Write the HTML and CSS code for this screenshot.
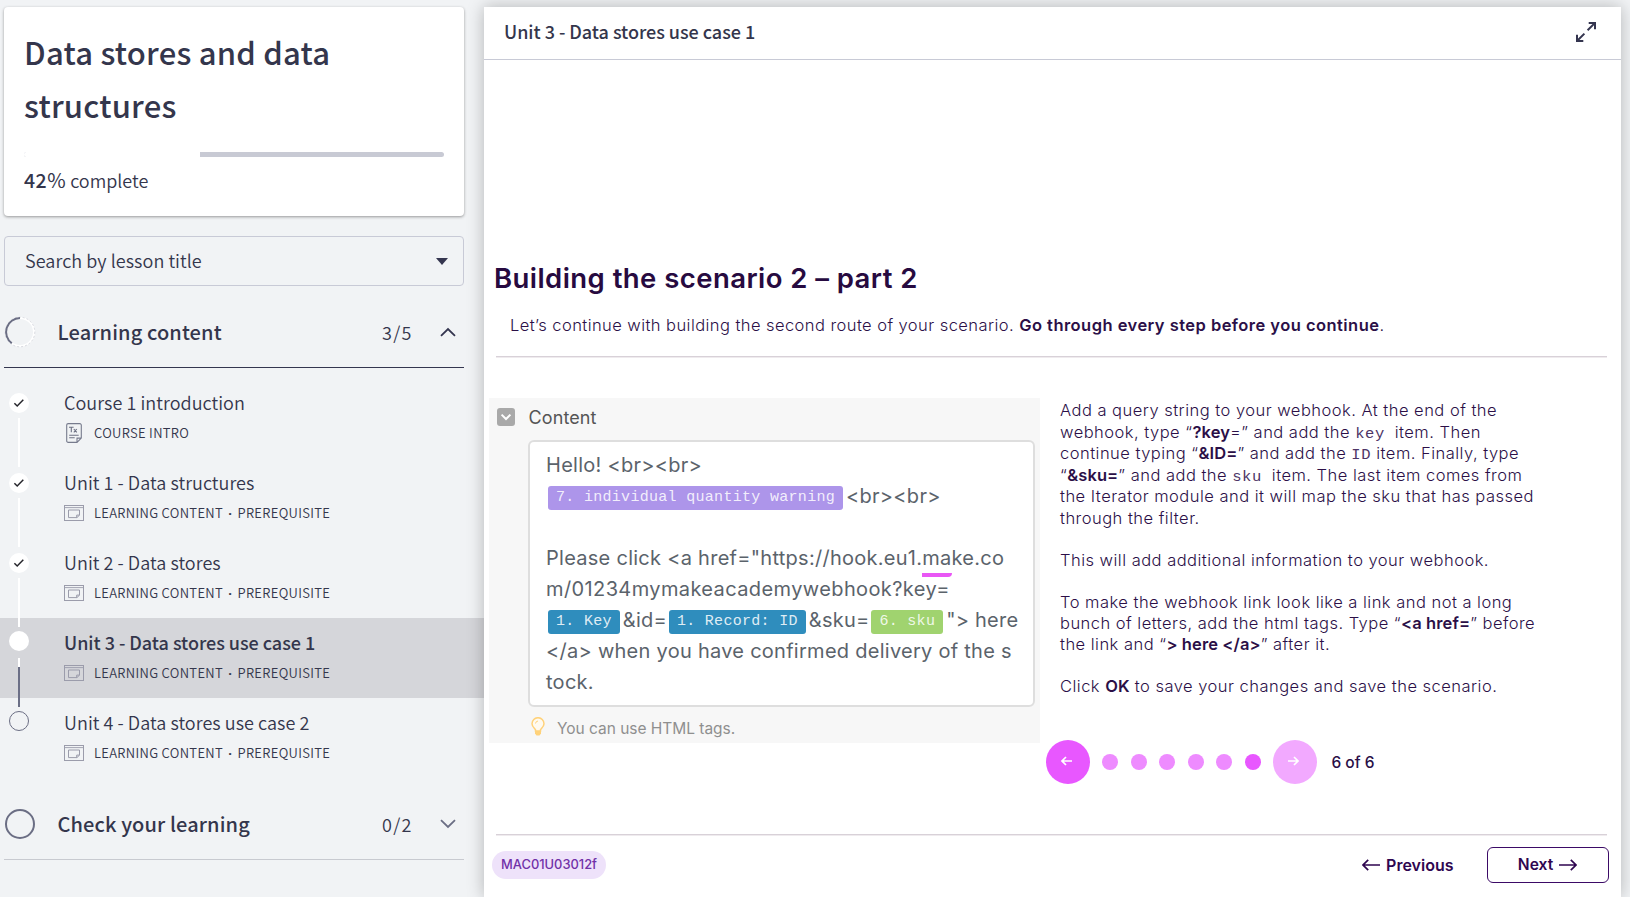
FILE: index.html
```html
<!DOCTYPE html>
<html lang="en">
<head>
<meta charset="utf-8">
<title>Data stores and data structures</title>
<link rel="stylesheet" href="styles.css">
</head>
<body>
<svg class="defs" width="0" height="0" aria-hidden="true">
  <symbol id="check" viewBox="0 0 20 20"><circle cx="10" cy="10" r="10" fill="#fff"/><path d="M5.4 10.3 8.2 13 14.3 6.8" fill="none" stroke="#26262c" stroke-width="1.5"/></symbol>
  <symbol id="lesson" viewBox="0 0 20 16"><g fill="none" stroke="#9b9cab" stroke-width="1"><rect x=".5" y=".5" width="19" height="15"/><path d="M.5 2.6h19" stroke-width=".9"/><path d="M4.5 5h11v5.2l-2.600 2.400H4.500Z"/><path d="M12.700 12.600v-2.500h2.800"/></g></symbol>
  <symbol id="arrow-right" viewBox="0 0 18 12"><path d="M0 6h17M11.800.8 17 6l-5.200 5.200" fill="none" stroke="currentColor" stroke-width="1.700"/></symbol>
  <symbol id="arrow-left" viewBox="0 0 18 12"><path d="M18 6H1M6.200.8 1 6l5.200 5.200" fill="none" stroke="currentColor" stroke-width="1.700"/></symbol>
</svg>
<div class="app">
  <aside class="sidebar">
    <section class="course-card">
      <h1 class="course-title">Data stores and data structures</h1>
      <div class="progress"><div class="progress-done" style="width:42%"></div></div>
      <p class="progress-label"><b>42</b><span class="unit">%</span> complete</p>
    </section>
    <div class="search"><span>Search by lesson title</span><svg width="12" height="7" viewBox="0 0 12 7"><path d="M0 0h12L6 7Z" fill="#34354f"/></svg></div>

    <header class="section-head open">
      <svg class="ring" width="32" height="32" viewBox="0 0 32 32"><circle cx="16" cy="16" r="14" fill="none" stroke="#fff" stroke-width="2"/><circle cx="16" cy="16" r="14.800" fill="none" stroke="#c9cad2" stroke-width=".7" stroke-dasharray="2 2"/><path d="M16 2A14 14 0 0 0 7.800 27.300" fill="none" stroke="#6b6e84" stroke-width="2"/></svg>
      <h2>Learning content</h2><span class="count">3/5</span>
      <svg width="16" height="10" viewBox="0 0 16 10"><path d="M1 8.800 8 2l7 6.800" fill="none" stroke="#34354f" stroke-width="1.800"/></svg>
    </header>
    <ul class="lessons">
      <li class="lesson">
        <div class="rail"><svg width="20" height="20"><use href="#check"/></svg><i class="link"></i></div>
        <div class="info"><p class="name">Course 1 introduction</p>
        <p class="meta"><svg class="doc" width="16" height="20" viewBox="0 0 16 20"><path d="M2.200.6h11.600a1.500 1.500 0 0 1 1.500 1.500v13l-4.300 4.300H2.200A1.500 1.500 0 0 1 .7 17.900V2.100A1.500 1.500 0 0 1 2.200.6ZM11 19.200v-4.100h4.200" fill="none" stroke="#777b8d" stroke-width="1.100"/><path d="M3 4.300h4.600M5.300 4.300v5M7.800 6l3 3.400M10.800 6l-3 3.400M3.200 12.300h9.500M3.200 14.800h5.500" fill="none" stroke="#6d7183" stroke-width="1.100"/></svg><span>COURSE INTRO</span></p></div>
      </li>
      <li class="lesson">
        <div class="rail"><svg width="20" height="20"><use href="#check"/></svg><i class="link"></i></div>
        <div class="info"><p class="name">Unit 1 - Data structures</p>
        <p class="meta"><svg width="20" height="16"><use href="#lesson"/></svg><span>LEARNING CONTENT <i class="sep">·</i> PREREQUISITE</span></p></div>
      </li>
      <li class="lesson">
        <div class="rail"><svg width="20" height="20"><use href="#check"/></svg><i class="link"></i></div>
        <div class="info"><p class="name">Unit 2 - Data stores</p>
        <p class="meta"><svg width="20" height="16"><use href="#lesson"/></svg><span>LEARNING CONTENT <i class="sep">·</i> PREREQUISITE</span></p></div>
      </li>
      <li class="lesson current">
        <div class="rail"><i class="dot"></i><i class="link half"></i></div>
        <div class="info"><p class="name">Unit 3 - Data stores use case 1</p>
        <p class="meta"><svg width="20" height="16"><use href="#lesson"/></svg><span>LEARNING CONTENT <i class="sep">·</i> PREREQUISITE</span></p></div>
      </li>
      <li class="lesson todo">
        <div class="rail"><i class="dot"></i></div>
        <div class="info"><p class="name">Unit 4 - Data stores use case 2</p>
        <p class="meta"><svg width="20" height="16"><use href="#lesson"/></svg><span>LEARNING CONTENT <i class="sep">·</i> PREREQUISITE</span></p></div>
      </li>
    </ul>
    <header class="section-head closed">
      <svg class="ring" width="32" height="32" viewBox="0 0 32 32"><circle cx="16" cy="16" r="14" fill="none" stroke="#6b6e84" stroke-width="2"/></svg>
      <h2>Check your learning</h2><span class="count">0/2</span>
      <svg width="16" height="10" viewBox="0 0 16 10"><path d="M1 1.200 8 8l7-6.800" fill="none" stroke="#6b6e84" stroke-width="1.800"/></svg>
    </header>
  </aside>

  <main class="viewer">
    <header class="viewer-head"><span>Unit 3 - Data stores use case 1</span>
      <svg width="22" height="22" viewBox="0 0 22 22"><path d="M12.600 9.300 20 1.900M13.700 1.900H20v6.300M9.400 12.600 2 20M2 13.700V20h6.300" fill="none" stroke="#34354f" stroke-width="2"/></svg>
    </header>
    <article class="slide">
      <h2 class="slide-title">Building the scenario 2 – part 2</h2>
      <p class="lead">Let’s continue with building the second route of your scenario. <b>Go through every step before you continue</b>.</p>
      <hr class="rule">
      <div class="columns">
        <figure class="shot">
          <div class="shot-label"><svg width="18" height="18" viewBox="0 0 18 18"><rect width="18" height="18" rx="3" fill="#a9a9a9"/><path d="M4.600 6.600 9 11l4.400-4.400" fill="none" stroke="#fff" stroke-width="2"/></svg><span>Content</span></div>
          <div class="field">
            <div class="row">Hello! &lt;br&gt;&lt;br&gt;</div>
            <div class="row"><code class="chip violet">7. individual quantity warning</code>&lt;br&gt;&lt;br&gt;</div>
            <div class="row"></div>
            <div class="row">Please click &lt;a href="https://hook.eu1.<span class="marked">make.co</span></div>
            <div class="row wide">m/01234mymakeacademywebhook?key=</div>
            <div class="row tight"><code class="chip blue">1. Key</code>&amp;id=<code class="chip blue">1. Record: ID</code>&amp;sku=<code class="chip green">6. sku</code>"&gt; here</div>
            <div class="row">&lt;/a&gt; when you have confirmed delivery of the s</div>
            <div class="row">tock.</div>
          </div>
          <div class="hint"><svg width="14" height="19" viewBox="0 0 14 19"><path d="M4.500 14v-1.300C3 11 1 9.500 1 6.700a6 6 0 0 1 12 0c0 2.800-2 4.300-3.500 6V14Z" fill="#fffaf0" stroke="#ffd27a" stroke-width="1.500"/><path d="M4.500 6.500A2.800 2.800 0 0 1 7 4" fill="none" stroke="#ffd27a"/><path d="M4 14h6v2.500L8.500 18.500h-3L4 16.500Z" fill="#ffd27a"/></svg><span>You can use HTML tags.</span></div>
        </figure>
        <div class="steps">
          <div class="copy">
            <p class="first">Add a query string to your webhook. At the end of the<br>webhook, type “<b>?key</b>=” and add the <code>key </code> item. Then<br>continue typing “<b>&amp;ID=</b>” and add the <code>ID</code> item. Finally, type<br>“<b>&amp;sku=</b>” and add the <code>sku </code> item. The last item comes from<br>the Iterator module and it will map the sku that has passed<br>through the filter.</p>
            <p>This will add additional information to your webhook.</p>
            <p>To make the webhook link look like a link and not a long<br>bunch of letters, add the html tags. Type “<b>&lt;a href=</b>” before<br>the link and “<b>&gt; here &lt;/a&gt;</b>” after it.</p>
            <p>Click <b>OK</b> to save your changes and save the scenario.</p>
          </div>
          <nav class="pager">
            <span class="turn"><svg width="11" height="10" viewBox="0 0 11 10"><path d="M11 5H1M5 1 1 5l4 4" fill="none" stroke="#fff" stroke-width="1.700"/></svg></span>
            <span class="dots"><i></i><i></i><i></i><i></i><i></i><i class="on"></i></span>
            <span class="turn off"><svg width="11" height="10" viewBox="0 0 11 10"><path d="M0 5h10M6 1l4 4-4 4" fill="none" stroke="#fff" stroke-width="1.700"/></svg></span>
            <span class="pages">6 of 6</span>
          </nav>
        </div>
      </div>
      <hr class="rule">
      <footer class="slide-foot">
        <span class="code">MAC01U03012f</span>
        <span class="prev"><svg width="18" height="12"><use href="#arrow-left"/></svg>Previous</span>
        <span class="next">Next<svg width="18" height="12"><use href="#arrow-right"/></svg></span>
      </footer>
    </article>
  </main>
</div>
</body>
</html>
```
FILE: styles.css
```css
* { box-sizing: border-box; margin: 0; padding: 0; }
body { height: 897px; overflow: hidden; background: #f1f3f5; color: #34364c; font-family: "Noto Sans CJK SC", "Noto Sans", sans-serif; }
svg { flex: none; display: block; }
.defs { position: absolute; }
.app { display: flex; height: 897px; padding-top: 7px; }

.sidebar { width: 484px; flex: none; }
.course-card { width: 460px; height: 209px; margin-left: 4px; padding: 18px 20px 0 20px; background: #fff; border-radius: 4px; box-shadow: 0 1px 3px rgba(40, 40, 40, .45); }
.course-title { width: 340px; font-size: 31px; font-weight: 500; letter-spacing: .22px; line-height: 53px; }
.progress { height: 5px; margin-top: 21px; background: #c8cad4; border-radius: 3px; overflow: hidden; }
.progress-done { height: 5px; background: #fff; }
.progress-label { margin-top: 11px; font-size: 18px; font-weight: 350; line-height: 24px; }
.progress-label b { font-size: 19.5px; font-weight: 500; letter-spacing: .5px; line-height: 20px; }
.unit { font-size: 20px; font-weight: 400; letter-spacing: .5px; line-height: 20px; }
.search { display: flex; align-items: center; justify-content: space-between; width: 460px; height: 50px; margin: 20px 0 0 4px; padding: 0 15px 3px 20px; border: 1px solid #c8cad6; border-radius: 4px; font-size: 18px; font-weight: 350; letter-spacing: .06px; line-height: 24px; }
.search svg { margin-top: 3px; }

.section-head { display: flex; align-items: center; width: 460px; margin-left: 4px; padding-right: 8px; }
.section-head.open { height: 71px; margin-top: 11px; border-bottom: 1px solid #34364f; }
.section-head.closed { height: 72px; margin-top: 10px; border-bottom: 1px solid #c8cad0; }
.section-head h2 { flex: 1; margin-left: 21.5px; font-size: 20px; font-weight: 500; letter-spacing: .12px; line-height: 28px; }
.count { margin-right: 27.5px; font-size: 18px; font-weight: 350; letter-spacing: 1.2px; line-height: 26px; }

.lessons { list-style: none; margin-top: 10px; }
.lesson { display: flex; height: 80px; padding-left: 9px; }
.lesson.current { background: #d5d6da; }
.rail { position: relative; z-index: 1; display: flex; flex-direction: column; align-items: center; width: 20px; height: 80px; padding-top: 15px; }
.current .rail, .todo .rail { padding-top: 13px; }
.link { flex: none; width: 2px; height: 49px; margin-top: 5px; background: #fff; }
.link.half { margin-top: 7px; background: linear-gradient(#fff 9px, #6b6f86 9px); }
.dot { flex: none; width: 20px; height: 20px; border-radius: 50%; background: #fff; }
.todo .dot { background: none; border: 1px solid #6b6e84; }
.info { margin-left: 35px; padding-top: 12px; }
.name { font-size: 18px; font-weight: 350; letter-spacing: .05px; line-height: 24px; }
.current .name { font-weight: 500; letter-spacing: -.03px; }
.meta { display: flex; align-items: center; gap: 10px; height: 20px; margin-top: 9px; font-size: 13px; font-weight: 350; letter-spacing: .32px; line-height: 20px; }
.doc { margin: 0 2px; }
.sep { margin: 0 2px; font-family: "Noto Sans", sans-serif; font-style: normal; font-weight: 700; line-height: 1; }

.viewer { width: 1137px; background: #fff; box-shadow: 0 0 16px rgba(0, 0, 0, .26); }
.viewer-head { display: flex; align-items: center; justify-content: space-between; height: 53px; padding: 0 24px 4px 20px; border-bottom: 1px solid #c8cad6; font-size: 18px; font-weight: 500; letter-spacing: -.03px; line-height: 26px; }
.viewer-head svg { margin-top: 2px; }
.slide { padding: 198px 0 0; color: #2b0f47; font-family: Inter, sans-serif; }
.slide-title { margin-left: 10px; color: #270a40; font-size: 27.500px; font-weight: 600; letter-spacing: .44px; line-height: 40px; }
.lead { margin: 15px 0 0 26px; font-size: 16.5px; font-weight: 300; letter-spacing: .435px; line-height: 24px; white-space: nowrap; }
.lead b { font-weight: 600; letter-spacing: .46px; }
.rule { height: 1px; margin: 19px 14px 0 12px; border: 0; background: #d8d1d8; box-shadow: 0 1px 0 #efebee; }
.columns { display: grid; grid-template-columns: 551px 1fr; column-gap: 6px; margin: 41px 0 50px 5px; }
.columns + .rule { margin-top: 0; }

.shot { height: 345px; padding: 10px 0 0 8px; background: #f7f7f7; }
.shot-label { display: flex; align-items: center; gap: 13.5px; height: 18px; color: #555; font-size: 18px; letter-spacing: .1px; }
.field { width: 507px; height: 267px; margin: 14px 0 0 31px; padding: 8px 0 0 16px; background: #fff; border: 2px solid #dedede; border-radius: 6px; }
.row { display: flex; align-items: center; height: 31px; color: #5b636b; font-size: 20px; letter-spacing: .27px; line-height: 31px; white-space: pre; }
.row.wide { letter-spacing: .39px; }
.row.tight { letter-spacing: .22px; }
.chip { height: 24px; margin: 3px 3px 0 2px; padding: 0 8px; border-radius: 3px; color: rgba(255, 255, 255, .86); font: 15px/24px "Liberation Mono", monospace; letter-spacing: .3px; }
.violet { background: #ad95ea; }
.blue { background: #2f8dbd; }
.green { background: #a0d36f; }
.marked { position: relative; }
.marked::after { content: ""; position: absolute; left: 0; bottom: -3px; width: 30px; height: 4px; background: #e957f5; border-radius: 0 0 6px 0; }
.hint { display: flex; align-items: center; gap: 12px; height: 22px; margin: 10px 0 0 34px; color: #8f8f8f; font-size: 15.5px; letter-spacing: -.03px; }
.hint svg { margin-top: -3px; }

.copy { height: 298px; padding: 2px 0 0 14px; font-size: 16.5px; font-weight: 300; letter-spacing: .48px; line-height: 21px; white-space: nowrap; }
.copy p + p { margin-top: 21px; }
.copy .first { line-height: 21.5px; }
.copy b { font-weight: 600; letter-spacing: .1px; }
.copy code { color: #4d3566; font: 15.500px/1 "Liberation Mono", monospace; letter-spacing: .6px; }
.pager { display: flex; align-items: center; margin-top: 44px; }
.turn { display: flex; align-items: center; justify-content: center; width: 44px; height: 44px; border-radius: 50%; background: #e857ff; padding: 0 3px 2px 0; }
.turn.off { background: #f2a9ff; }
.dots { display: flex; gap: 12.600px; margin: 2px 12px; }
.dots i { width: 16px; height: 16px; border-radius: 50%; background: #ee8bff; }
.dots .on { background: #e857ff; }
.pages { margin-left: 14.5px; font-size: 15.500px; font-weight: 500; }

.slide-foot { display: flex; align-items: center; margin: 12px 12.5px 0 8px; font-size: 16px; font-weight: 600; color: #2f0650; }
.code { height: 28px; padding: 0 9px; margin-right: auto; border-radius: 14px; background: #eee2fa; color: #7131a8; font-size: 12.900px; font-weight: 500; line-height: 28px; }
.prev { display: flex; align-items: center; gap: 6px; }
.next { display: flex; align-items: center; justify-content: center; gap: 6px; width: 122px; height: 36px; margin-left: 33px; border: 1.500px solid #3b0a66; border-radius: 6px; padding-bottom: 1px; font-size: 15.600px; }
```
